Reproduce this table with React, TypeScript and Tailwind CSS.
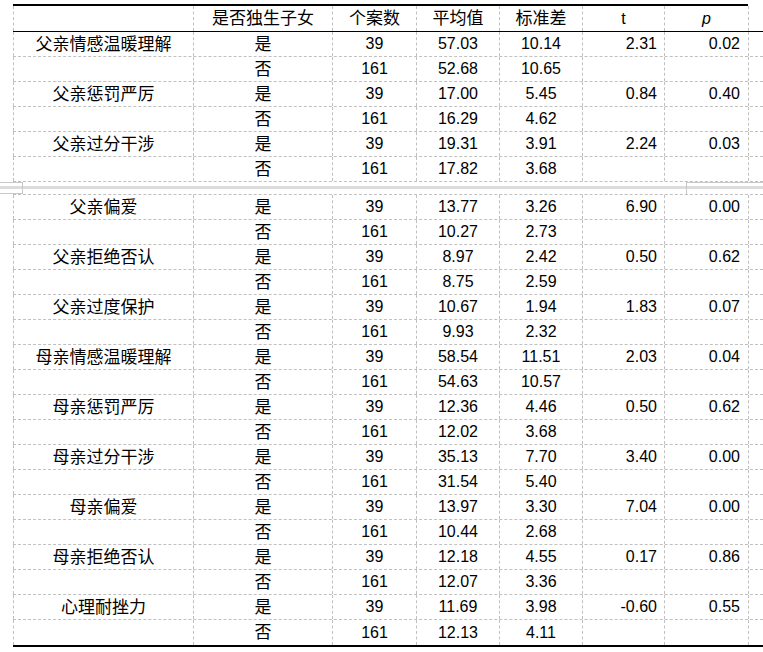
import React from 'react'

type Row = { name: string; yes: [string, string, string, string, string]; no: [string, string, string] }

const topRows: Row[] = [
  { name: '父亲情感温暖理解', yes: ['39', '57.03', '10.14', '2.31', '0.02'], no: ['161', '52.68', '10.65'] },
  { name: '父亲惩罚严厉', yes: ['39', '17.00', '5.45', '0.84', '0.40'], no: ['161', '16.29', '4.62'] },
  { name: '父亲过分干涉', yes: ['39', '19.31', '3.91', '2.24', '0.03'], no: ['161', '17.82', '3.68'] },
]

const bottomRows: Row[] = [
  { name: '父亲偏爱', yes: ['39', '13.77', '3.26', '6.90', '0.00'], no: ['161', '10.27', '2.73'] },
  { name: '父亲拒绝否认', yes: ['39', '8.97', '2.42', '0.50', '0.62'], no: ['161', '8.75', '2.59'] },
  { name: '父亲过度保护', yes: ['39', '10.67', '1.94', '1.83', '0.07'], no: ['161', '9.93', '2.32'] },
  { name: '母亲情感温暖理解', yes: ['39', '58.54', '11.51', '2.03', '0.04'], no: ['161', '54.63', '10.57'] },
  { name: '母亲惩罚严厉', yes: ['39', '12.36', '4.46', '0.50', '0.62'], no: ['161', '12.02', '3.68'] },
  { name: '母亲过分干涉', yes: ['39', '35.13', '7.70', '3.40', '0.00'], no: ['161', '31.54', '5.40'] },
  { name: '母亲偏爱', yes: ['39', '13.97', '3.30', '7.04', '0.00'], no: ['161', '10.44', '2.68'] },
  { name: '母亲拒绝否认', yes: ['39', '12.18', '4.55', '0.17', '0.86'], no: ['161', '12.07', '3.36'] },
  { name: '心理耐挫力', yes: ['39', '11.69', '3.98', '-0.60', '0.55'], no: ['161', '12.13', '4.11'] },
]

const cell = 'flex items-center border-r border-dashed border-[#c0c0c0]'
const zh = 'text-[17px]'

// one grid line: 7 cells, widths fixed to match the sheet's columns
function Line({ cells, className, header }: { cells: React.ReactNode[]; className: string; header?: boolean }) {
  return (
    <div className={`ml-[13px] flex ${className}`}>
      <div className={`${cell} w-[181px] justify-center border-l ${zh}`}>{cells[0]}</div>
      <div className={`${cell} w-[139px] justify-center ${zh}`}>{cells[1]}</div>
      <div className={`${cell} w-[84px] justify-center`}>{cells[2]}</div>
      <div className={`${cell} w-[83px] justify-center`}>{cells[3]}</div>
      <div className={`${cell} w-[83px] justify-center`}>{cells[4]}</div>
      <div className={`${cell} w-[82px] ${header ? 'justify-center' : 'justify-end pr-[7px]'}`}>{cells[5]}</div>
      <div className={`${cell} w-[84px] ${header ? 'justify-center' : 'justify-end pr-[8px]'}`}>{cells[6]}</div>
    </div>
  )
}

function Body({ rows, first, last }: { rows: Row[]; first?: boolean; last?: boolean }) {
  const lines: React.ReactNode[] = []
  rows.forEach((r, i) => {
    const isFirst = first && i === 0
    const isLast = last && i === rows.length - 1
    lines.push(
      <Line
        key={r.name + 'y'}
        cells={[r.name, '是', ...r.yes]}
        className={`border-b border-dashed border-[#c0c0c0] ${isFirst ? 'h-[26px] border-t' : 'h-[25px]'}`}
      />
    )
    lines.push(
      <Line
        key={r.name + 'n'}
        cells={['', '否', ...r.no, '', '']}
        className={isLast ? 'h-[27px] border-b-2 border-black' : 'h-[25px] border-b border-dashed border-[#c0c0c0]'}
      />
    )
  })
  return <>{lines}</>
}

function PageBreak() {
  return (
    <div className="flex h-[12px] w-[763px]">
      <div className="w-[23px] border-y border-r border-[#c8c8c8]">
        <div className="mt-[3px] h-[3px] bg-[#dcdcdc]" />
      </div>
      <div className="flex-1">
        <div className="mt-[4px] h-[3px] bg-[#dcdcdc]" />
      </div>
      <div className="w-[77px] border-t border-l border-[#c8c8c8]">
        <div className="mt-[3px] h-[3px] bg-[#dcdcdc]" />
      </div>
    </div>
  )
}

export default function App() {
  return (
    <div
      className="w-[763px] h-[652px] bg-white pt-[4px] text-[16px] leading-none text-black"
      style={{ fontFamily: '"Liberation Sans", "Noto Sans CJK SC", sans-serif' }}
    >
      <div className="ml-[13px] h-[2px] w-[735px] bg-black" />
      <Line
        header
        cells={['', '是否独生子女', <span className={zh}>个案数</span>, <span className={zh}>平均值</span>, <span className={zh}>标准差</span>, 't', <i>p</i>]}
        className="h-[26px] border-b border-black"
      />
      <Body rows={topRows} />
      <PageBreak />
      <Body rows={bottomRows} first last />
    </div>
  )
}
